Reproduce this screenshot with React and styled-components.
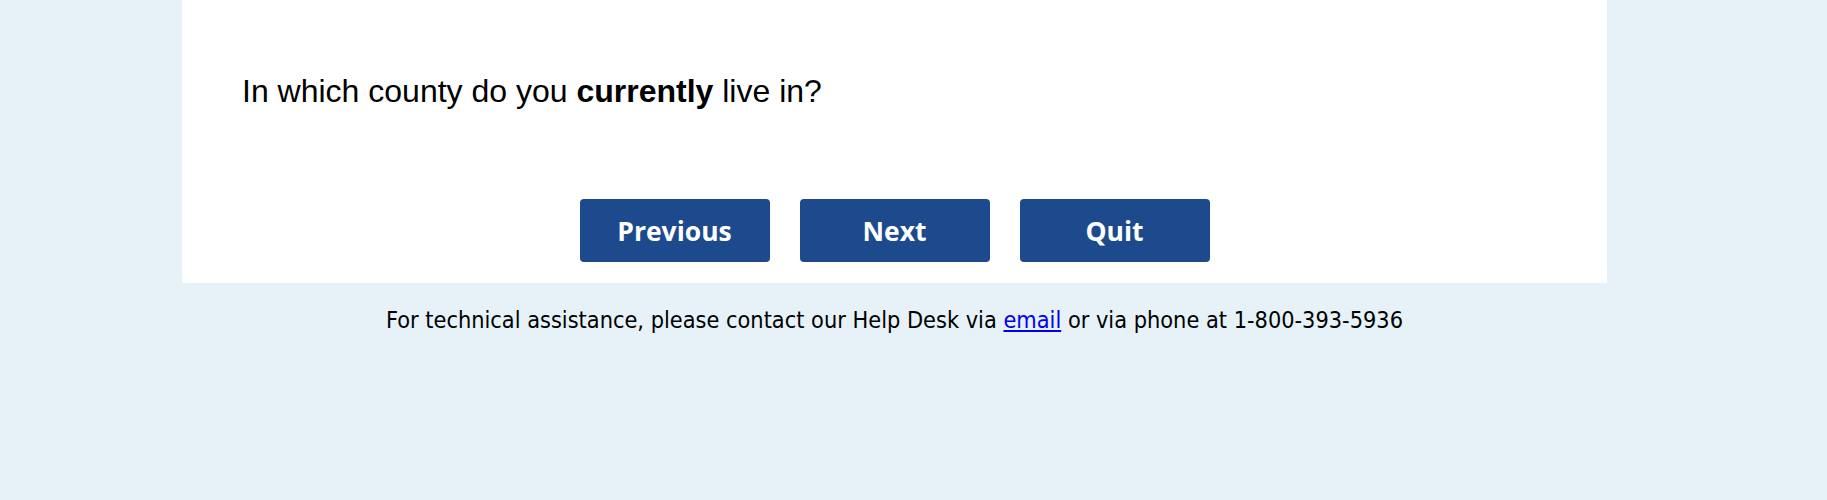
import React from 'react';
import styled, { createGlobalStyle } from 'styled-components';

const GlobalStyle = createGlobalStyle`
  html, body {
    margin: 0;
    padding: 0;
    background-color: #e6f2f7;
  }
`;

function App() {
  return (
    <>
      <GlobalStyle />
      <Page>
        <Panel>
          <Question>
            In which county do you <strong>currently</strong> live in?
          </Question>
          <ButtonRow>
            <NavButton type="button">Previous</NavButton>
            <NavButton type="button">Next</NavButton>
            <NavButton type="button">Quit</NavButton>
          </ButtonRow>
        </Panel>
        <Footer>
          For technical assistance, please contact our Help Desk via{' '}
          <a href="#email">email</a> or via phone at 1-800-393-5936
        </Footer>
      </Page>
    </>
  );
}

export default App;

const Page = styled.div`
  width: 1425px;
  margin-left: 182px;
  min-height: 500px;
`;

const Panel = styled.div`
  background-color: #ffffff;
  padding: 73px 60px 21px;
  display: flex;
  flex-direction: column;
`;

const Question = styled.div`
  font-family: "Liberation Sans", Arial, sans-serif;
  font-size: 32px;
  line-height: 37px;
  color: #000;
  strong {
    font-weight: bold;
  }
`;

const ButtonRow = styled.div`
  display: flex;
  justify-content: center;
  gap: 30px;
  margin-top: 89px;
`;

const NavButton = styled.button`
  width: 190px;
  height: 63px;
  border: none;
  border-radius: 4px;
  background-color: #1d4a8c;
  color: #ffffff;
  font-family: "Open Sans", sans-serif;
  font-weight: 700;
  font-size: 26.5px;
  cursor: pointer;
`;

const Footer = styled.div`
  text-align: center;
  margin-top: 22px;
  font-family: "DejaVu Sans Condensed", "DejaVu Sans", sans-serif;
  font-size: 23.3px;
  line-height: 30px;
  color: #000;
  a {
    color: #0000ee;
    text-decoration: underline;
  }
`;
